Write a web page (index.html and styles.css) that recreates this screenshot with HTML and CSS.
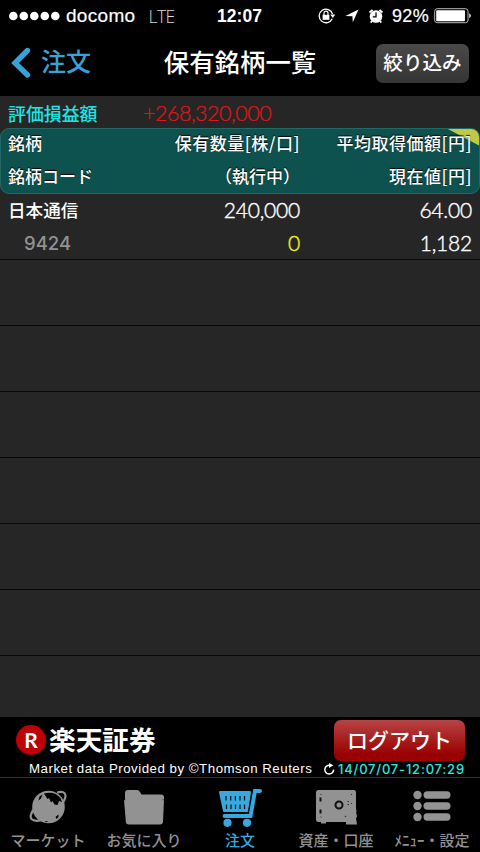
FILE: index.html
```html
<!DOCTYPE html>
<html lang="ja">
<head>
<meta charset="utf-8">
<title>保有銘柄一覧</title>
<link rel="stylesheet" href="styles.css">
</head>
<body>
<div class="app">
  <header class="status">
    <div class="status-left">
      <svg class="signal" width="52" height="10" viewBox="0 0 52 10" fill="#fff"><circle cx="4.3" cy="5" r="4.3"/><circle cx="14.8" cy="5" r="4.3"/><circle cx="25.3" cy="5" r="4.3"/><circle cx="35.8" cy="5" r="4.3"/><circle cx="46.3" cy="5" r="4.3"/></svg>
      <span class="carrier">docomo</span>
      <span class="network">LTE</span>
    </div>
    <span class="clock">12:07</span>
    <div class="status-right">
      <svg width="18" height="16" viewBox="0 0 18 16"><path d="M14.2 10.7A6.8 6.8 0 1 1 14.5 6" fill="none" stroke="#fff" stroke-width="1.3"/><path d="M12.3 6.4h5l-2.5 3.5z" fill="#fff"/><rect x="4.6" y="6.8" width="6.8" height="5" fill="#fff"/><path d="M6 7V5.2a2 2 0 0 1 4 0V7" fill="none" stroke="#fff" stroke-width="1.2"/></svg>
      <svg class="locate" width="14" height="14" viewBox="0 0 14 14"><path d="M13.5.5 7.8 13.3 7.4 7.2.4 7z" fill="#fff"/></svg>
      <svg class="alarm" width="16" height="16" viewBox="0 0 16 16"><circle cx="8" cy="8.500" r="6.300" fill="#fff"/><path d="M1.500 4.500 4.500 1.800M14.500 4.500 11.500 1.800M4 13l-1.300 1.600M12 13l1.300 1.600" stroke="#fff" stroke-width="1.800"/><path d="M8 4.500v4.300H4.800" fill="none" stroke="#000" stroke-width="1.300"/></svg>
      <span class="percent">92%</span>
      <svg width="38" height="16" viewBox="0 0 38 16"><rect x=".7" y=".7" width="33.3" height="14" rx="2.5" fill="none" stroke="#bbb"/><rect x="2.2" y="2.2" width="28.8" height="11" rx="1" fill="#fff"/><path d="M35.3 5.200q3 2.500 0 5z" fill="#fff"/></svg>
    </div>
  </header>

  <nav class="navbar">
    <div class="back">
      <svg width="20" height="32" viewBox="0 0 20 32"><path d="M16.500 3.500 4 16l12.500 12" fill="none" stroke="#38a1d8" stroke-width="5.400" stroke-linecap="round" stroke-linejoin="miter"/></svg>
      <span class="back-label">注文</span>
    </div>
    <h1 class="title">保有銘柄一覧</h1>
    <div class="filter">絞り込み</div>
  </nav>

  <main class="content">
    <div class="summary"><span class="summary-label">評価損益額</span><span class="summary-value">+268,320,000</span></div>
    <div class="thead">
      <svg class="corner" width="34" height="18" viewBox="0 0 34 18"><path d="M0 0h34v18z" fill="#bdca43"/></svg>
      <div class="line"><span>銘柄</span><span class="wide">保有数量[株/口]</span><span class="wide">平均取得価額[円]</span></div>
      <div class="line"><span>銘柄コード</span><span>（執行中）</span><span class="wide">現在値[円]</span></div>
    </div>
    <div class="row">
      <div class="line"><span class="name">日本通信</span><span class="num">240,000</span><span class="num">64.00</span></div>
      <div class="line"><span class="code">9424</span><span class="num yellow">0</span><span class="num">1,182</span></div>
    </div>
    <div class="row"></div><div class="row"></div><div class="row"></div><div class="row"></div><div class="row"></div><div class="row"></div>
  </main>

  <section class="brandbar">
    <div class="brand-top">
      <div class="logo">R</div>
      <span class="brand">楽天証券</span>
      <div class="logout">ログアウト</div>
    </div>
    <div class="feed">
      <span class="provider">Market data Provided by ©Thomson Reuters</span>
      <svg width="13" height="13" viewBox="0 0 13 13"><path d="M7 2.300A4.400 4.400 0 1 0 10.600 6.500" fill="none" stroke="#fff" stroke-width="1.500"/><path d="M6 0 10.300 2.200 6 5z" fill="#fff"/></svg>
      <span class="stamp">14/07/07-12:07:29</span>
    </div>
  </section>

  <footer class="tabs">
    <div class="tab">
      <svg width="40" height="40" viewBox="0 0 40 40"><path d="M29 5.500q8-2 8.500 3 0 4-4 9M6 22q-5 7-2.500 10 3 3 10 1" fill="none" stroke="#929292" stroke-width="2.200"/><circle cx="20.500" cy="20" r="16.300" fill="#929292"/><path d="M16 6.500q10-3 16.500 4.500l1.500 4-3-1-1.500 4-3-.5-2-3.500-1.500 1.500-2-4.500-1.500 1zM11.500 9.500l3-2-1.500 4-2.500 2zM27.500 30l3-2.500v2.500l-2 2zM17 34l3.500.5-3 .8z" fill="#000"/></svg>
      <span>マーケット</span>
    </div>
    <div class="tab">
      <svg width="42" height="40" viewBox="0 0 42 40"><path d="M2 13V6q0-3 3-3h9q2 0 3 2l1.500 2.500H38q3 0 3 3V13z" fill="#929292"/><path d="M1 13h40l-1 21.500q-.2 3-3 3H6q-3 0-3.200-3z" fill="#929292"/><path d="M1 12.800h1.500M39.500 12.800H41" stroke="#333" stroke-width=".8"/></svg>
      <span>お気に入り</span>
    </div>
    <div class="tab active">
      <svg width="44" height="40" viewBox="0 0 44 40"><path d="M2 5h30l-2.500 19H6z" fill="#38a9df" stroke="#38a9df" stroke-width="2" stroke-linejoin="round"/><path d="M42 4h-5L32.500 29H6.500" fill="none" stroke="#38a9df" stroke-width="4" stroke-linecap="round"/><path d="M6 26h24L34 5" fill="none" stroke="#001018" stroke-width="1"/><path d="M8 9v4.500M12.700 9v4.500M17.400 9v4.500M22 9v4.500M26.500 9v4.500M8.500 17.500V22M13 17.500V22M17.500 17.500V22M22 17.500V22M26.500 17.500V22" stroke="#111" stroke-width="1.200"/><circle cx="9.500" cy="35.800" r="4.100" fill="#38a9df"/><circle cx="29" cy="35.800" r="4.100" fill="#38a9df"/></svg>
      <span>注文</span>
    </div>
    <div class="tab">
      <svg width="42" height="40" viewBox="0 0 42 40"><rect x="1" y="3" width="40" height="32" rx="2.500" fill="#929292"/><path d="M6 34h5v2.500H6zM31 37.500V30l6-12q6 4 4 8 2 4 0 5l1 6.500z" fill="#929292"/><path d="M5.500 10.500v4M5.500 22.500v4" stroke="#111" stroke-width="2"/><circle cx="24" cy="18" r="3.500" fill="none" stroke="#111" stroke-width="2"/><path d="M32.500 14.500h1.500M32.500 17.500h1.500M36 16.500h1M30 30l1-1M5.500 7.500h1M5.500 30h1M36 7.500h1" stroke="#333" stroke-width="1.200"/></svg>
      <span>資産・口座</span>
    </div>
    <div class="tab">
      <svg width="40" height="40" viewBox="0 0 40 40" fill="#929292"><circle cx="5.500" cy="8" r="4.200"/><rect x="11.500" y="4.300" width="27" height="7.400" rx="3.700"/><circle cx="5.500" cy="19" r="4.200"/><rect x="11.500" y="15.300" width="27" height="7.400" rx="3.700"/><circle cx="5.500" cy="30" r="4.200"/><rect x="11.500" y="26.300" width="27" height="7.400" rx="3.700"/></svg>
      <span>ﾒﾆｭｰ・設定</span>
    </div>
  </footer>
</div>
</body>
</html>
```

FILE: styles.css
```css
* { box-sizing: border-box; }
body {
  margin: 0;
  background: #000;
  color: #fff;
  font-family: "Liberation Sans", "Noto Sans CJK JP", sans-serif;
}
.app {
  width: 480px;
  height: 852px;
  overflow: hidden;
  display: flex;
  flex-direction: column;
  white-space: nowrap;
}
svg { display: block; flex: none; }

.status {
  height: 32px;
  display: grid;
  grid-template-columns: 1fr auto 1fr;
  align-items: center;
  padding: 0 8px 0 9px;
  font-size: 18px;
  line-height: 30px;
}
.status-left, .status-right { display: flex; align-items: center; }
.status-right { justify-content: flex-end; }
.carrier { margin-left: 5px; font-size: 19px; letter-spacing: .3px; -webkit-text-stroke: .2px #fff; }
.network { margin-left: 13px; color: #ddd; font-family: "Open Sans", sans-serif; font-weight: 300; font-size: 17.500px; letter-spacing: -.5px; }
.clock { margin-right: 2px; font-weight: bold; font-size: 17.500px; }
.locate { margin-left: 9px; }
.alarm { margin-left: 9px; }
.percent { margin: 0 5px 0 8px; letter-spacing: .3px; -webkit-text-stroke: .2px #fff; }

.navbar {
  height: 64px;
  display: grid;
  grid-template-columns: 1fr auto 1fr;
  align-items: center;
  padding: 0 11px 2px;
}
.back {
  display: flex;
  align-items: center;
  gap: 10px;
  color: #38a1d8;
  font-size: 25px;
  font-weight: 500;
}
.back-label { line-height: 36px; padding-bottom: 2px; }
.title { margin: 0; font-size: 25.4px; font-weight: 500; line-height: 40px; }
.filter {
  justify-self: end;
  width: 93px;
  height: 39px;
  border-radius: 7px;
  background: linear-gradient(#494949, #353535);
  text-align: center;
  font-size: 19.6px;
  font-weight: 500;
  line-height: 38px;
}

.content { height: 621px; flex: none; background: #262626; overflow: hidden; }
.summary {
  height: 32px;
  display: flex;
  align-items: center;
  padding: 4px 8px 0;
}
.summary-label { width: 135px; color: #1ce5e6; font-size: 17.900px; font-weight: 500; line-height: 28px; padding-top: 1px; }
.summary-value {
  color: #e01616;
  font-family: Lato, sans-serif;
  font-weight: 300;
  font-size: 21.500px;
  letter-spacing: -.5px;
  line-height: 26px;
  padding-bottom: 2px;
  -webkit-text-stroke: .2px #e01616;
}
.thead {
  position: relative;
  height: 66px;
  border: 1px solid #246866;
  border-radius: 9px;
  background: #0e5250;
  font-family: "Noto Sans CJK JP", sans-serif;
  font-size: 17px;
  font-weight: 500;
  text-shadow: 0 -1px 1px #000;
  overflow: hidden;
}
.corner { position: absolute; right: -1px; top: -1px; }
.line {
  position: relative;
  height: 33px;
  display: grid;
  grid-template-columns: 120px 172px 172px;
  padding: 0 8px;
  line-height: 32px;
}
.thead .line { height: 32px; line-height: 28px; padding: 0 7px; }
.thead .line + .line { line-height: 30px; }
.wide { letter-spacing: .5px; }
.line > :nth-child(n+2) { text-align: right; }
.row { height: 66px; border-bottom: 1px solid #090909; }
.name { font-size: 17.600px; font-weight: 500; line-height: 35px; }
.code { padding-left: 16px; color: #929292; font-family: Inter, sans-serif; font-size: 18.500px; font-weight: 500; line-height: 33px; }
.num { font-family: Lato, sans-serif; font-weight: 300; font-size: 21px; letter-spacing: -.2px; line-height: 31px; -webkit-text-stroke: .4px currentColor; }
.yellow { color: #f3f31c; }

.brandbar { height: 61px; flex: none; border-bottom: 1px solid #353535; }
.brand-top { height: 44px; display: flex; align-items: center; padding: 2px 15px 0 16px; }
.logo {
  width: 30px;
  height: 30px;
  border-radius: 50%;
  background: #bd0007;
  text-align: center;
  font: bold 21px/30px Lato, sans-serif;
}
.brand { margin-left: 3px; padding-top: 2px; font-size: 26.700px; font-weight: 700; line-height: 38px; }
.logout {
  margin-left: auto;
  width: 131px;
  height: 41px;
  border-radius: 7px;
  background: linear-gradient(#b84445, #990000 85%);
  text-align: center;
  font-size: 21px;
  font-weight: 500;
  line-height: 41px;
}
.feed { height: 16px; display: flex; align-items: center; padding-left: 29px; font-size: 13.300px; line-height: 16px; }
.provider { width: 294px; letter-spacing: .5px; }
.stamp { margin-left: 2px; color: #2ee5df; font-family: Inter, sans-serif; font-weight: 500; font-size: 13px; letter-spacing: .8px; }

.tabs { height: 74px; display: grid; grid-template-columns: repeat(5, 96px); color: #929292; }
.tab { display: flex; flex-direction: column; align-items: center; padding-top: 9px; font-size: 15px; font-weight: 500; line-height: 22px; }
.tab span { margin-top: 3px; }
.active { color: #38a9df; }
```
